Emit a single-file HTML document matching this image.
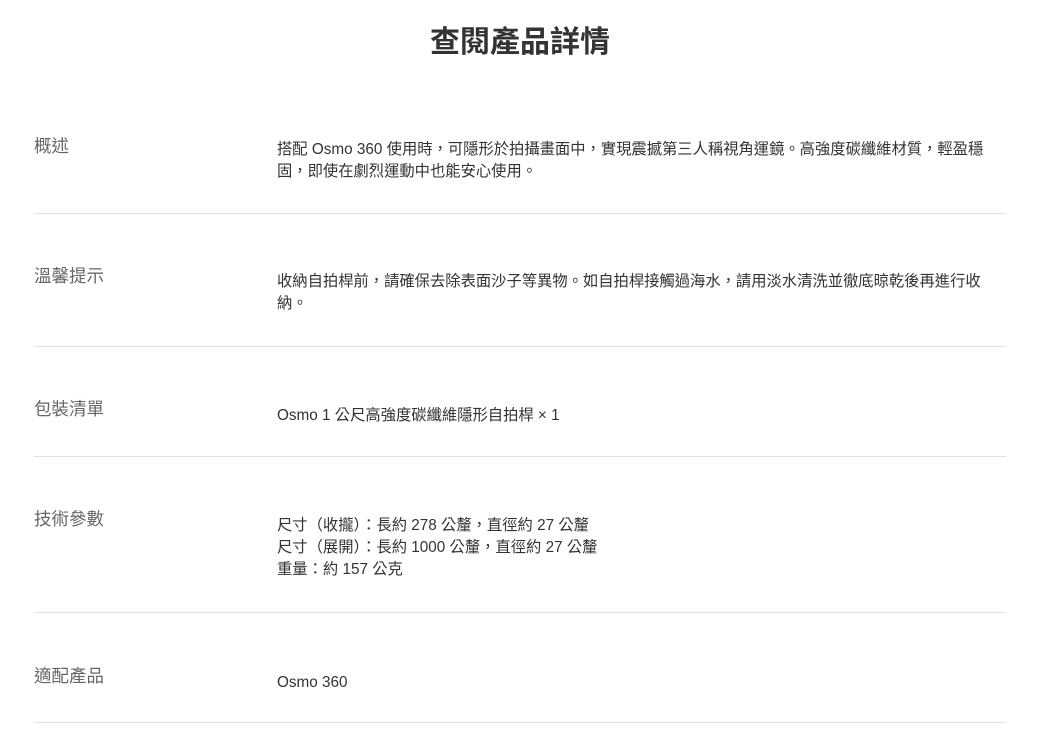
<!DOCTYPE html>
<html><head><meta charset="utf-8">
<style>
html,body{margin:0;padding:0;background:#fff;width:1040px;height:752px;overflow:hidden;}
body{position:relative;font-family:"Liberation Sans","Noto Sans CJK TC",sans-serif;}
h1{position:absolute;top:22px;left:0;width:1040px;margin:0;text-align:center;font-size:30px;line-height:42px;font-weight:bold;color:#333;}
.l{position:absolute;left:34px;font-size:17.5px;line-height:22px;color:#666;}
.c{position:absolute;left:277px;font-size:15.3px;line-height:22px;color:#333;white-space:nowrap;}
.d{position:absolute;left:34px;width:972px;height:1px;background:#e3e3e3;}
</style></head><body>
<h1>查閱產品詳情</h1>

<div class="l" style="top:135px">概述</div>
<div class="c" style="top:139px">搭配 Osmo 360 使用時，可隱形於拍攝畫面中，實現震撼第三人稱視角運鏡。高強度碳纖維材質，輕盈穩<br>固，即使在劇烈運動中也能安心使用。</div>
<div class="d" style="top:213px"></div>

<div class="l" style="top:265px">溫馨提示</div>
<div class="c" style="top:271px">收納自拍桿前，請確保去除表面沙子等異物。如自拍桿接觸過海水，請用淡水清洗並徹底晾乾後再進行收<br>納。</div>
<div class="d" style="top:346px"></div>

<div class="l" style="top:398px">包裝清單</div>
<div class="c" style="top:405px">Osmo 1 公尺高強度碳纖維隱形自拍桿 × 1</div>
<div class="d" style="top:456px"></div>

<div class="l" style="top:508px">技術參數</div>
<div class="c" style="top:515px">尺寸（收攏）：長約 278 公釐，直徑約 27 公釐<br>尺寸（展開）：長約 1000 公釐，直徑約 27 公釐<br>重量：約 157 公克</div>
<div class="d" style="top:612px"></div>

<div class="l" style="top:665px">適配產品</div>
<div class="c" style="top:672px">Osmo 360</div>
<div class="d" style="top:722px"></div>
</body></html>
